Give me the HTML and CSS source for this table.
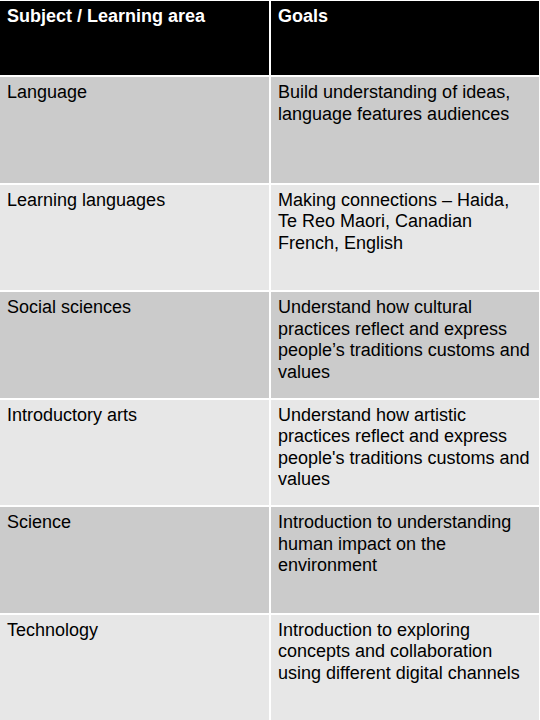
FILE: index.html
```html
<!DOCTYPE html>
<html>
<head>
<meta charset="utf-8">
<link rel="stylesheet" href="styles.css">
</head>
<body>
<div class="table">
  <div class="cell head">Subject / Learning area</div>
  <div class="cell head">Goals</div>

  <div class="cell dark">Language</div>
  <div class="cell dark">Build understanding of ideas, language features audiences</div>

  <div class="cell light">Learning languages</div>
  <div class="cell light">Making connections – Haida, Te Reo Maori, Canadian French, English</div>

  <div class="cell dark">Social sciences</div>
  <div class="cell dark">Understand how cultural practices reflect and express people’s traditions customs and values</div>

  <div class="cell light">Introductory arts</div>
  <div class="cell light">Understand how artistic practices reflect and express people's traditions customs and values</div>

  <div class="cell dark">Science</div>
  <div class="cell dark">Introduction to understanding human impact on the environment</div>

  <div class="cell light">Technology</div>
  <div class="cell light">Introduction to exploring concepts and collaboration using different digital channels</div>
</div>
</body>
</html>
```
FILE: styles.css
```css
html, body {
  margin: 0;
  padding: 0;
  background: #ffffff;
}
.table {
  width: 539px;
  padding-top: 1px;
  display: grid;
  grid-template-columns: 269px 268px;
  grid-template-rows: 74px repeat(6, 105.5px);
  gap: 2px;
  font-family: "Liberation Sans", Arial, sans-serif;
  font-size: 18px;
  line-height: 21.5px;
  color: #000;
}
.cell {
  padding: 5px 8px 0 7px;
}
.head {
  background: #000;
  color: #fff;
  font-weight: bold;
}
.dark {
  background: #cbcbcb;
}
.light {
  background: #e7e7e7;
}
```
